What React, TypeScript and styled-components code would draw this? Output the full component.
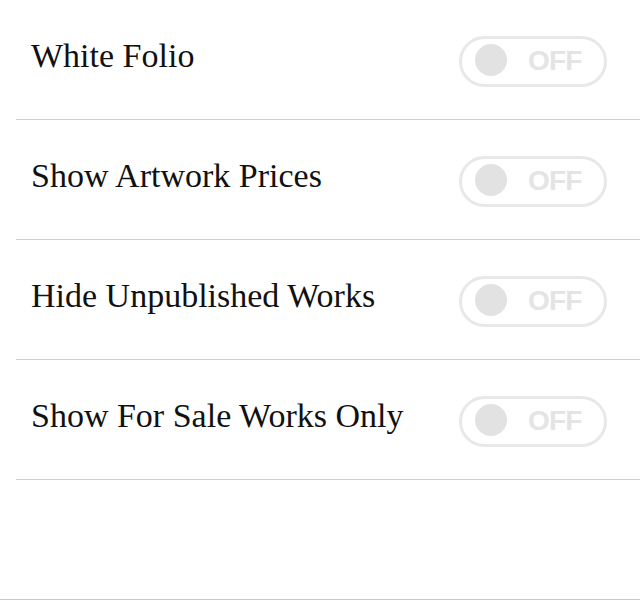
import React from 'react';
import styled, { createGlobalStyle } from 'styled-components';

const GlobalStyle = createGlobalStyle`
  html, body {
    margin: 0;
    padding: 0;
    background: #fff;
  }
`;

const settings = [
  'White Folio',
  'Show Artwork Prices',
  'Hide Unpublished Works',
  'Show For Sale Works Only',
];

const App = () => {
  return (
    <>
      <GlobalStyle />
      <Page>
        <List>
          {settings.map((label) => (
            <Row key={label}>
              <Label>{label}</Label>
              <Toggle>
                <Knob />
                <ToggleText>OFF</ToggleText>
              </Toggle>
            </Row>
          ))}
        </List>
      </Page>
    </>
  );
};

export default App;

const Page = styled.div`
  width: 640px;
  height: 600px;
  border-bottom: 1px solid #c8c8c8;
  box-sizing: border-box;
  background: #fff;
`;

const List = styled.div`
  margin-left: 16px;
  display: flex;
  flex-direction: column;
`;

const Row = styled.div`
  height: 120px;
  box-sizing: border-box;
  border-bottom: 1px solid #cfcfcf;
  padding: 0 33px 2px 15px;
  display: flex;
  align-items: center;
  justify-content: space-between;
`;

const Label = styled.div`
  font-family: 'Liberation Serif', serif;
  font-size: 34px;
  color: #111;
  margin-top: -6px;
`;

const Toggle = styled.div`
  width: 148px;
  height: 51px;
  margin-top: 5px;
  box-sizing: border-box;
  border: 3px solid #e8e8e8;
  border-radius: 26px;
  display: flex;
  align-items: center;
  padding-left: 13px;
  gap: 21px;
`;

const Knob = styled.div`
  width: 32px;
  height: 32px;
  margin-top: -2px;
  border-radius: 50%;
  background: #e2e2e2;
`;

const ToggleText = styled.span`
  font-family: 'Liberation Sans', sans-serif;
  font-weight: bold;
  font-size: 28px;
  color: #e4e4e4;
  letter-spacing: -0.8px;
`;
